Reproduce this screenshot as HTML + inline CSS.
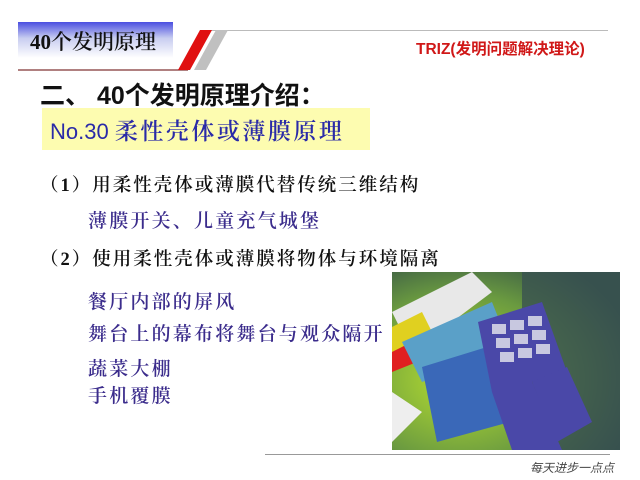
<!DOCTYPE html>
<html><head><meta charset="utf-8"><style>
body{margin:0;width:640px;height:480px;background:#fff;position:relative;overflow:hidden;font-family:"Liberation Sans","Noto Sans CJK SC",sans-serif}
.a{position:absolute;white-space:nowrap}
.s{font-family:"Liberation Serif","Noto Serif CJK SC",serif;font-weight:600}
.p{color:#3b2c8c;font-size:19px;letter-spacing:2.2px}
.k{color:#111;font-size:18.5px;letter-spacing:2px}
</style></head><body>
<div class="a" style="left:18px;top:22px;width:155px;height:36px;background:linear-gradient(#4a4ee0,#c8cdf0 45%,#fff);"></div>
<div class="a s" style="left:30px;top:26px;font-size:21px;color:#111">40个发明原理</div>
<div class="a" style="left:18px;top:69px;width:170px;height:2px;background:#b08080"></div>
<div class="a" style="left:210px;top:30px;width:398px;height:1px;background:#bbb"></div>
<svg class="a" style="left:170px;top:28px" width="60" height="44"><polygon points="30,2 42,2 20,42 8,42" fill="#e01010"/><polygon points="46,2 58,2 36,42 24,42" fill="#c0c0c0"/></svg>
<div class="a" style="left:416px;top:37px;font-size:15.5px;font-weight:bold;color:#d01818">TRIZ(发明问题解决理论)</div>
<div class="a" style="left:40px;top:76px;font-size:25px;font-weight:bold;color:#111">二、 40个发明原理介绍：</div>
<div class="a" style="left:42px;top:108px;width:328px;height:42px;background:#fdfcb0"></div>
<div class="a" style="left:50px;top:113px;font-size:22px;color:#2a2aa8">No.30 <span class="s" style="font-size:23px;letter-spacing:2.5px">柔性壳体或薄膜原理</span></div>
<div class="a k s" style="left:40px;top:171px">（1）用柔性壳体或薄膜代替传统三维结构</div>
<div class="a p s" style="left:88px;top:206px">薄膜开关、儿童充气城堡</div>
<div class="a k s" style="left:40px;top:245px">（2）使用柔性壳体或薄膜将物体与环境隔离</div>
<div class="a p s" style="left:88px;top:287px">餐厅内部的屏风</div>
<div class="a p s" style="left:88px;top:319px">舞台上的幕布将舞台与观众隔开</div>
<div class="a p s" style="left:88px;top:354px">蔬菜大棚</div>
<div class="a p s" style="left:88px;top:381px">手机覆膜</div>
<svg class="a" style="left:392px;top:272px" width="228" height="178">
<defs><radialGradient id="g" cx="0.3" cy="0.6" r="0.8"><stop offset="0" stop-color="#b8e030"/><stop offset="0.6" stop-color="#6a9a40"/><stop offset="1" stop-color="#2e4a48"/></radialGradient></defs>
<rect width="228" height="178" fill="url(#g)"/>
<rect x="130" y="0" width="98" height="178" fill="#3a5250" opacity="0.8"/>
<polygon points="0,40 80,0 100,20 20,80" fill="#e8e8e8"/>
<polygon points="0,55 30,40 40,60 0,80" fill="#e0d020"/>
<polygon points="0,80 20,70 25,90 0,100" fill="#e02020"/>
<polygon points="10,70 100,30 120,80 30,110" fill="#5aa0c8"/>
<polygon points="30,95 95,75 118,150 45,170" fill="#3a68b8"/>
<polygon points="86,50 150,30 175,100 140,110 170,178 120,178 100,120" fill="#4a48a8"/>
<polygon points="140,110 175,95 200,150 165,170" fill="#4a48a8"/>
<g fill="#c8c8e0"><rect x="100" y="52" width="14" height="10"/><rect x="118" y="48" width="14" height="10"/><rect x="136" y="44" width="14" height="10"/><rect x="104" y="66" width="14" height="10"/><rect x="122" y="62" width="14" height="10"/><rect x="140" y="58" width="14" height="10"/><rect x="108" y="80" width="14" height="10"/><rect x="126" y="76" width="14" height="10"/><rect x="144" y="72" width="14" height="10"/></g>
<polygon points="0,120 30,140 0,170" fill="#eee"/>
</svg>
<div class="a" style="left:265px;top:454px;width:345px;height:1px;background:#999"></div>
<div class="a" style="left:530px;top:459px;font-size:12px;font-style:italic;color:#444">每天进步一点点</div>
</body></html>
